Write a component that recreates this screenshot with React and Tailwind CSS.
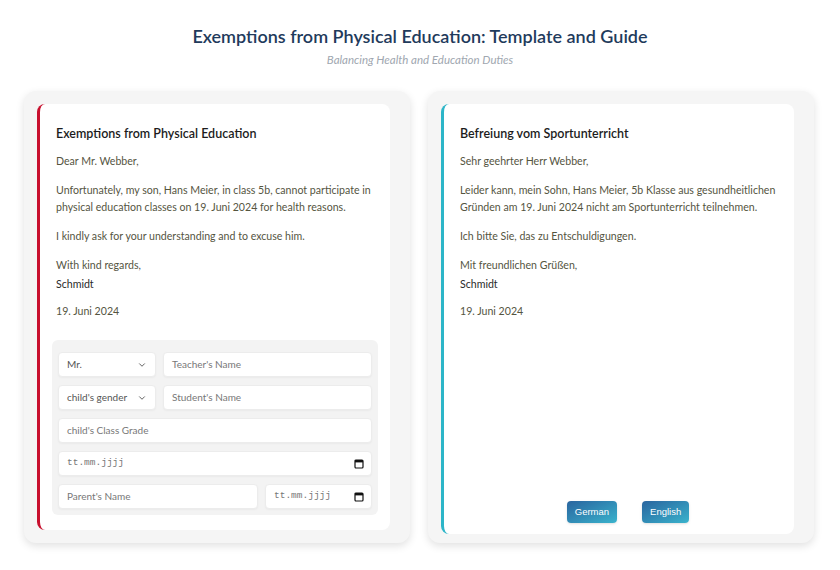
import { ChevronDown } from 'lucide-react'

const font = { fontFamily: 'Lato, "Open Sans", sans-serif' }

function CalendarIcon() {
  return (
    <svg width="10" height="10" viewBox="0 0 10 10" className="shrink-0">
      <rect x="1" y="1" width="8" height="8" rx="1" fill="none" stroke="#111" strokeWidth="1.2" />
      <rect x="1" y="1" width="8" height="2.4" fill="#111" />
    </svg>
  )
}

function Field({ children, className = '' }) {
  return (
    <div className={`h-[25px] bg-white rounded border border-[#ececec] shadow-[0_1px_2px_rgba(0,0,0,0.04)] flex items-center px-2 text-[10px] text-[#777] ${className}`}>
      {children}
    </div>
  )
}

function Select({ label, className }) {
  return (
    <Field className={`justify-between ${className}`}>
      <span className="text-[#555]">{label}</span>
      <ChevronDown size={10} strokeWidth={2} className="text-[#444]" />
    </Field>
  )
}

function DateField({ className }) {
  return (
    <Field className={`justify-between pr-[7px] ${className}`}>
      <span className="font-['Liberation_Mono',monospace] text-[9.5px] text-[#777]">tt.mm.jjjj</span>
      <CalendarIcon />
    </Field>
  )
}

function Letter({ title, lines }) {
  return (
    <div className="px-1 text-[10.6px] leading-[17px] text-[#55553f]">
      <h2 className="text-[12.5px] font-semibold text-[#1c1c1c] mt-[1px] mb-[11px]">{title}</h2>
      <p className="mb-3">{lines.salutation}</p>
      <p className="mb-3">{lines.body}</p>
      <p className="mb-3">{lines.ask}</p>
      <p className="mb-[2px]">{lines.regards}</p>
      <p className="text-[#2a2a2a] mb-[10px]">Schmidt</p>
      <p>19. Juni 2024</p>
    </div>
  )
}

export default function App() {
  return (
    <div className="w-[840px] h-[570px] bg-white overflow-hidden" style={font}>
      <header className="text-center pt-[23px] pb-[23px]">
        <h1 className="text-[18px] leading-[27px] font-semibold text-[#1f3b5c]">
          Exemptions from Physical Education: Template and Guide
        </h1>
        <p className="text-[11.5px] italic text-[#a0a7b0] mt-[2px] leading-[16px]">Balancing Health and Education Duties</p>
      </header>

      <div className="grid grid-cols-2 gap-[18px] pl-6 pr-[26px]">
        <section className="bg-[#f5f5f5] rounded-xl p-[13px] pr-5 shadow-[0_3px_8px_rgba(0,0,0,0.12)]">
          <div className="bg-white rounded-lg border-l-[3px] border-[#c8102e] px-3 pt-[20px] pb-[15px] h-[426px] flex flex-col">
            <Letter
              title="Exemptions from Physical Education"
              lines={{
                salutation: 'Dear Mr. Webber,',
                body: 'Unfortunately, my son, Hans Meier, in class 5b, cannot participate in physical education classes on 19. Juni 2024 for health reasons.',
                ask: 'I kindly ask for your understanding and to excuse him.',
                regards: 'With kind regards,',
              }}
            />
            <div className="mt-auto bg-[#f3f3f3] rounded-md px-[6px] pt-[12px] pb-[6px] flex flex-col gap-2">
              <div className="flex gap-[7px]">
                <Select label="Mr." className="w-[98px]" />
                <Field className="flex-1">Teacher's Name</Field>
              </div>
              <div className="flex gap-[7px]">
                <Select label="child's gender" className="w-[98px]" />
                <Field className="flex-1">Student's Name</Field>
              </div>
              <Field>child's Class Grade</Field>
              <DateField />
              <div className="flex gap-[7px]">
                <Field className="w-[200px]">Parent's Name</Field>
                <DateField className="flex-1" />
              </div>
            </div>
          </div>
        </section>

        <section className="bg-[#f5f5f5] rounded-xl p-[13px] pr-5 pb-[9px] shadow-[0_3px_8px_rgba(0,0,0,0.12)]">
          <div className="bg-white rounded-lg border-l-[3px] border-[#2cb5c8] px-3 pt-[20px] pb-[11px] h-[430px] flex flex-col">
            <Letter
              title="Befreiung vom Sportunterricht"
              lines={{
                salutation: 'Sehr geehrter Herr Webber,',
                body: 'Leider kann, mein Sohn, Hans Meier, 5b Klasse aus gesundheitlichen Gründen am 19. Juni 2024 nicht am Sportunterricht teilnehmen.',
                ask: 'Ich bitte Sie, das zu Entschuldigungen.',
                regards: 'Mit freundlichen Grüßen,',
              }}
            />
            <div className="mt-auto flex justify-center gap-[25px] pl-[18px] font-['Liberation_Sans',Arial,sans-serif]">
              <button className="h-[22px] px-2 rounded text-[9.5px] text-white bg-gradient-to-br from-[#2a659f] to-[#3ab3cc] shadow-sm">German</button>
              <button className="h-[22px] px-2 rounded text-[9.5px] text-white bg-gradient-to-br from-[#2a659f] to-[#3ab3cc] shadow-sm">English</button>
            </div>
          </div>
        </section>
      </div>
    </div>
  )
}
